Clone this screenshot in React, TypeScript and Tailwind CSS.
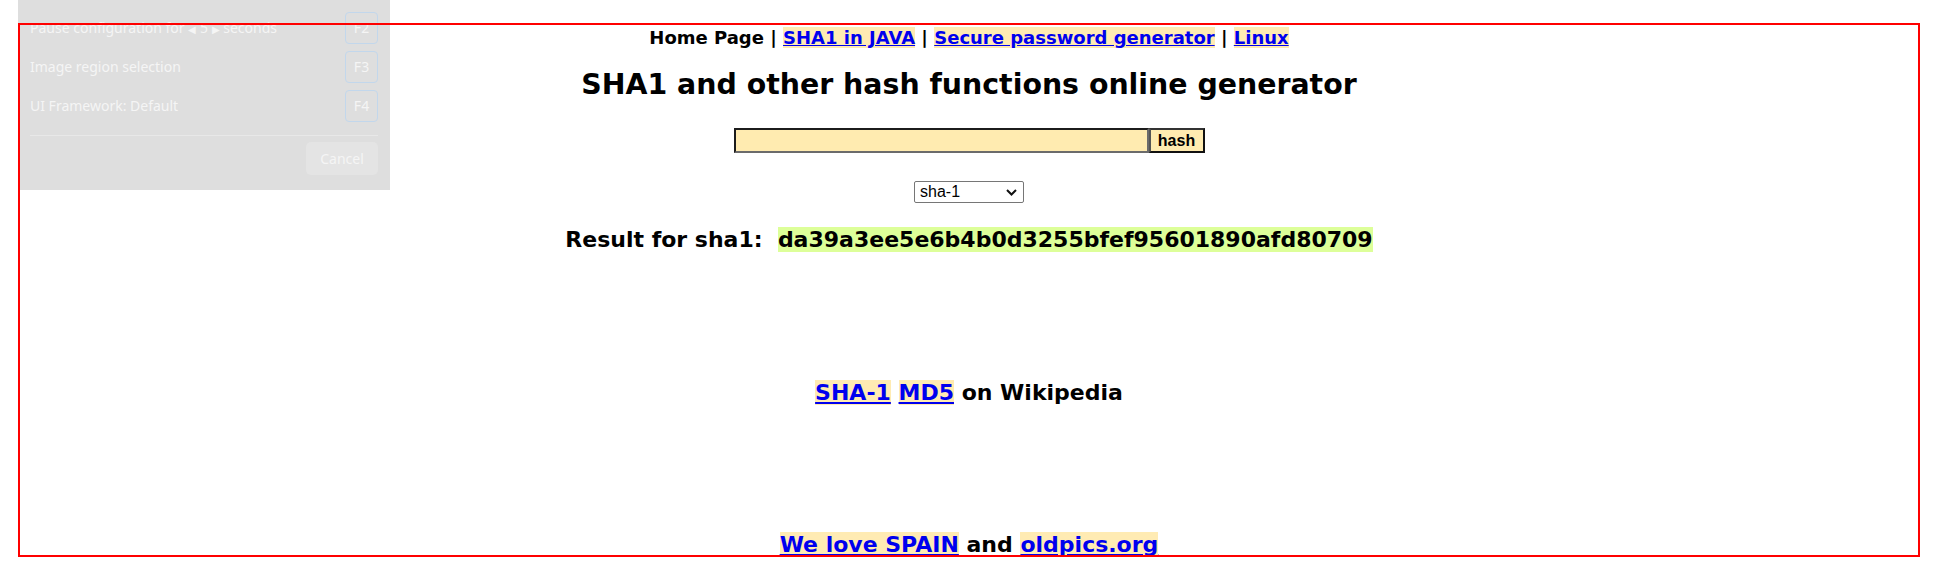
import { ReactNode } from "react";

const hl = "bg-[#ffebb3] text-[#0000ee] underline";

function Key({ label }: { label: string }) {
  return (
    <span className="flex h-[32px] w-[33px] items-center justify-center rounded-[4px] border border-[#c2d7ec] text-[14px] text-[#f5f5f5]">
      {label}
    </span>
  );
}

function PanelRow({ children, k }: { children: ReactNode; k: string }) {
  return (
    <div className="flex h-[39px] items-center justify-between">
      <span className="text-[14px] text-[#f5f5f5]">{children}</span>
      <Key label={k} />
    </div>
  );
}

// fenetre de capture grisée en haut a gauche
function CapturePanel() {
  return (
    <div
      className="absolute left-[18px] top-0 z-10 h-[190px] w-[372px] bg-[#dedede] pl-[12px] pr-[12px] pt-[8px]"
      style={{ fontFamily: '"Noto Sans", "Open Sans", sans-serif' }}
    >
      <PanelRow k="F2">
        Pause configuration for{" "}
        <span className="text-[10px]">◀</span> 5 <span className="text-[10px]">▶</span>{" "}
        seconds
      </PanelRow>
      <PanelRow k="F3">Image region selection</PanelRow>
      <PanelRow k="F4">UI Framework: Default</PanelRow>
      <div className="mt-[10px] border-t border-[#e8e8e8]" />
      <div className="mt-[6px] flex justify-end">
        <span className="flex h-[33px] w-[72px] items-center justify-center rounded-[5px] bg-[#e4e4e4] text-[14px] text-[#f5f5f5]">
          Cancel
        </span>
      </div>
    </div>
  );
}

export default function App() {
  return (
    <div className="relative min-h-[581px] w-full bg-white">
      <CapturePanel />
      <div className="pointer-events-none absolute left-[18px] top-[23px] z-20 h-[534px] w-[1902px] border-2 border-[#ff0000]" />

      <div
        className="flex flex-col items-center pt-[27px] font-bold text-black"
        style={{ fontFamily: '"DejaVu Sans", Verdana, sans-serif' }}
      >
        <div className="text-[18px] leading-[21px]">
          Home Page | <a className={hl}>SHA1 in JAVA</a> |{" "}
          <a className={hl}>Secure password generator</a> | <a className={hl}>Linux</a>
        </div>

        <h1 className="mt-[20px] text-[28.4px] leading-[34px]">
          SHA1 and other hash functions online generator
        </h1>

        <div className="mt-[26px] flex h-[25px]">
          <input
            className="h-[25px] w-[415px] border-2 border-b-[#6b6b6b] border-l-[#1c1c1c] border-r-[#6b6b6b] border-t-[#1c1c1c] bg-[#ffebb0] outline-none"
            type="text"
          />
          <button
            className="h-[25px] w-[56px] border-2 border-b-[#111] border-l-[#555] border-r-[#111] border-t-[#333] bg-[#ffebb0] text-[16px] font-bold leading-[20px] text-black"
            style={{ fontFamily: '"Liberation Sans", Arial, sans-serif' }}
          >
            hash
          </button>
        </div>

        <div
          className="mt-[28px] flex h-[22px] w-[110px] items-center justify-between rounded-[2px] border border-[#767676] pl-[5px] pr-[6px] text-[16px] font-normal leading-[18px] text-black"
          style={{ fontFamily: '"Liberation Sans", Arial, sans-serif' }}
        >
          <span>sha-1</span>
          <svg width="11" height="7" viewBox="0 0 11 7" fill="none">
            <path d="M1 1l4.5 4.5L10 1" stroke="#111" strokeWidth="2" />
          </svg>
        </div>

        <div className="mt-[23px] text-[22px] leading-[27px] whitespace-pre">
          Result for sha1:{"  "}
          <span className="bg-[#ddff99]">da39a3ee5e6b4b0d3255bfef95601890afd80709</span>
        </div>

        <div className="mt-[126px] text-[22px] leading-[28px]">
          <a className={hl}>SHA-1</a> <a className={hl}>MD5</a> on Wikipedia
        </div>

        <div className="mt-[124px] text-[22px] leading-[28px]">
          <a className={hl}>We love SPAIN</a> and <a className={hl}>oldpics.org</a>
        </div>
      </div>
    </div>
  );
}
